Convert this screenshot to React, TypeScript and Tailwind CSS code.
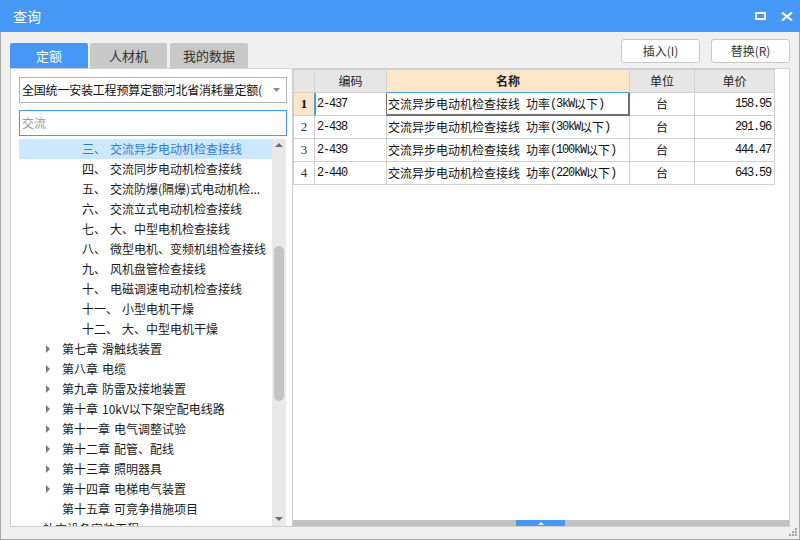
import React from "react";

function Mixed({ text }: { text: string }) {
  const parts = text.match(/[\x00-\x7f]+|[^\x00-\x7f]+/g) || [];
  return (
    <>
      {parts.map((p, i) =>
        /^[\x00-\x7f]/.test(p) ? (
          <span key={i} className="font-['Liberation_Mono',monospace] tracking-[-1.2px] whitespace-pre">
            {p}
          </span>
        ) : (
          <span key={i}>{p}</span>
        )
      )}
    </>
  );
}

const subs: [string, string][] = [
  ["三、", "交流异步电动机检查接线"],
  ["四、", "交流同步电动机检查接线"],
  ["五、", "交流防爆(隔爆)式电动机检..."],
  ["六、", "交流立式电动机检查接线"],
  ["七、", "大、中型电机检查接线"],
  ["八、", "微型电机、变频机组检查接线"],
  ["九、", "风机盘管检查接线"],
  ["十、", "电磁调速电动机检查接线"],
  ["十一、", "小型电机干燥"],
  ["十二、", "大、中型电机干燥"],
];

const chapters: [string, string, boolean][] = [
  ["第七章", "滑触线装置", true],
  ["第八章", "电缆", true],
  ["第九章", "防雷及接地装置", true],
  ["第十章", "10kV以下架空配电线路", true],
  ["第十一章", "电气调整试验", true],
  ["第十二章", "配管、配线", true],
  ["第十三章", "照明器具", true],
  ["第十四章", "电梯电气装置", true],
  ["第十五章", "可竞争措施项目", false],
];

const rows = [
  ["1", "2-437", "交流异步电动机检查接线 功率(3kW以下)", "台", "158.95"],
  ["2", "2-438", "交流异步电动机检查接线 功率(30kW以下)", "台", "291.96"],
  ["3", "2-439", "交流异步电动机检查接线 功率(100kW以下)", "台", "444.47"],
  ["4", "2-440", "交流异步电动机检查接线 功率(220kW以下)", "台", "643.59"],
];

function Arrow() {
  return (
    <svg width="5" height="8" viewBox="0 0 5 8" className="shrink-0">
      <path d="M0 0 L4 4 L0 8 Z" fill="#7a7a7a" />
    </svg>
  );
}

export default function App() {
  return (
    <div className="w-[800px] h-[540px] flex flex-col overflow-hidden font-['Noto_Sans_CJK_SC',sans-serif] text-[12px] text-[#222]">
      {/* Title bar */}
      <div className="h-[32px] shrink-0 bg-[#4598f5] flex items-center pl-[13px] pr-[7px]">
        <span className="text-white text-[14px] leading-none">查询</span>
        <div className="ml-auto flex items-center gap-[15px]">
          <svg width="11" height="8" viewBox="0 0 11 8">
            <rect x="1" y="1" width="9" height="6" fill="none" stroke="#fff" strokeWidth="2" />
          </svg>
          <svg width="12" height="9" viewBox="0 0 12 9">
            <path d="M1 0.5 L11 8.5 M11 0.5 L1 8.5" stroke="#fff" strokeWidth="2.2" />
          </svg>
        </div>
      </div>

      {/* Body */}
      <div className="flex-1 flex flex-col bg-[#f0f0f0] border-x border-b border-[#a9a9a9] relative">
        {/* Tabs + buttons */}
        <div className="h-[36px] shrink-0 flex px-[9px]">
          <div className="flex items-end">
            <div className="w-[78px] h-[25px] rounded-t-[2px] bg-[#4598f5] text-white text-[13px] flex items-center justify-center">
              定额
            </div>
            <div className="ml-[2px] w-[77px] h-[25px] rounded-t-[2px] bg-[#c8c8c8] text-[#333] text-[13px] flex items-center justify-center">
              人材机
            </div>
            <div className="ml-[3px] w-[78px] h-[25px] rounded-t-[2px] bg-[#c8c8c8] text-[#333] text-[13px] flex items-center justify-center">
              我的数据
            </div>
          </div>
          <div className="ml-auto mt-[7px] flex gap-[11px]">
            <div className="w-[79px] h-[24px] bg-white border border-[#c8c8c8] rounded-[3px] flex items-center justify-center text-[12px] text-[#333]">
              插入(I)
            </div>
            <div className="w-[79px] h-[24px] bg-white border border-[#c8c8c8] rounded-[3px] flex items-center justify-center text-[12px] text-[#333]">
              替换(R)
            </div>
          </div>
        </div>

        {/* Main */}
        <div className="h-[459px] shrink-0 flex px-[9px]">
          {/* Left panel */}
          <div className="w-[282px] bg-white border border-r-0 border-[#cfcfcf] flex flex-col pl-[8px] pr-[5px]">
            <div className="mt-[8px] h-[26px] shrink-0 border border-[#b4b4b4] flex items-center pl-[2px] pr-[6px]">
              <div className="flex-1 whitespace-nowrap text-[#111] leading-none tracking-[-0.2px]">
                全国统一安装工程预算定额河北省消耗量定额(
              </div>
              <svg width="7" height="4" viewBox="0 0 7 4" className="ml-[2px] shrink-0">
                <path d="M0 0 L7 0 L3.5 4 Z" fill="#8a8a8a" />
              </svg>
            </div>
            <div className="mt-[7px] h-[26px] shrink-0 border border-[#4598f5] flex items-center pl-[2px] text-[#9a9a9a]">
              交流
            </div>
            <div className="mt-[3px] flex-1 flex overflow-hidden">
              <div className="w-[253px] flex flex-col overflow-hidden">
                {subs.map(([n, t], i) => (
                  <div
                    key={i}
                    className={`h-[20px] shrink-0 flex items-center pl-[63px] whitespace-nowrap ${
                      i === 0 ? "bg-[#cce8ff] text-[#2f7ed6]" : "text-[#1a1a1a]"
                    }`}
                  >
                    <span>{n}</span>
                    <span className="ml-[4px]">{t}</span>
                  </div>
                ))}
                {chapters.map(([c, t, arr], i) => (
                  <div key={i} className="h-[20px] shrink-0 flex items-center pl-[27px] whitespace-nowrap text-[#1a1a1a]">
                    <div className="w-[16px] flex items-center">{arr ? <Arrow /> : null}</div>
                    <span>{c}</span>
                    <span className="ml-[4px]">{t}</span>
                  </div>
                ))}
                <div className="h-[20px] shrink-0 flex items-center pl-[24px] whitespace-nowrap text-[#1a1a1a]">
                  补充设备安装工程
                </div>
              </div>
              <div className="w-[14px] bg-[#e8e8e8] flex flex-col items-center">
                <div className="h-[12px] flex items-center justify-center">
                  <svg width="8" height="4" viewBox="0 0 8 4">
                    <path d="M0 4 L4 0 L8 4 Z" fill="#6e6e6e" />
                  </svg>
                </div>
                <div className="h-[95px]" />
                <div className="w-[10px] h-[155px] rounded-full bg-[#c3c3c3]" />
                <div className="flex-1" />
                <div className="h-[14px] flex items-center justify-center">
                  <svg width="8" height="4" viewBox="0 0 8 4">
                    <path d="M0 0 L8 0 L4 4 Z" fill="#6e6e6e" />
                  </svg>
                </div>
              </div>
            </div>
          </div>

          {/* Right panel */}
          <div className="w-[498px] bg-white border border-[#cfcfcf] flex flex-col">
            <div className="w-[482px] border-l border-t border-[#d0d0d0]">
              {/* header */}
              <div className="grid grid-cols-[21px_72px_243px_65px_80px] h-[23px] text-[12px] text-[#222]">
                <div className="bg-[#e6e6e6] border-r border-b border-[#d0d0d0]" />
                <div className="bg-[#e6e6e6] border-r border-b border-[#d0d0d0] flex items-center justify-center">编码</div>
                <div className="bg-[#fde7c9] border-r border-b border-[#d0d0d0] border-b-[#4598f5] flex items-center justify-center font-bold">名称</div>
                <div className="bg-[#e6e6e6] border-r border-b border-[#d0d0d0] flex items-center justify-center">单位</div>
                <div className="bg-[#e6e6e6] border-r border-b border-[#d0d0d0] flex items-center justify-center">单价</div>
              </div>
              {rows.map((r, i) => {
                const sel = i === 0;
                return (
                  <div key={i} className="grid grid-cols-[21px_72px_243px_65px_80px] h-[23px] text-[12px] text-[#111]">
                    <div
                      className={`border-r border-b border-[#d0d0d0] flex items-center justify-center font-['Liberation_Serif',serif] text-[13px] ${
                        sel ? "bg-[#fde5c7] font-bold border-r-[#4598f5]" : "text-[#333]"
                      }`}
                    >
                      {r[0]}
                    </div>
                    <div
                      className={`border-r border-b border-[#d0d0d0] flex items-center pl-[2px] ${
                        sel ? "shadow-[inset_1px_0_0_#4598f5] border-r-[#707070]" : ""
                      }`}
                    >
                      <Mixed text={r[1]} />
                    </div>
                    <div
                      className={`border-r border-b border-[#d0d0d0] flex items-center pl-[1px] whitespace-nowrap overflow-hidden ${
                        sel ? "border-r-[#707070] border-b-[#707070] shadow-[inset_-1px_-1px_0_#707070]" : ""
                      }`}
                    >
                      <Mixed text={r[2]} />
                    </div>
                    <div className="border-r border-b border-[#d0d0d0] flex items-center justify-center">{r[3]}</div>
                    <div className="border-r border-b border-[#d0d0d0] flex items-center justify-end pr-[3px]">
                      <Mixed text={r[4]} />
                    </div>
                  </div>
                );
              })}
            </div>
            <div className="flex-1" />
            <div className="h-[6px] shrink-0 flex bg-[#c2c2c2]">
              <div className="w-[223px]" />
              <div className="w-[49px] bg-[#4598f5] flex items-center justify-center">
                <svg width="6" height="3" viewBox="0 0 6 3">
                  <path d="M0 3 L3 0 L6 3 Z" fill="#fff" />
                </svg>
              </div>
            </div>
          </div>
        </div>

        {/* Bottom strip */}
        <div className="flex-1 flex justify-end items-end pr-[2px] pb-[3px]">
          <svg width="9" height="9" viewBox="0 0 9 9">
            <rect x="7" y="1" width="2" height="2" fill="#a0a0a0" />
            <rect x="4" y="4" width="2" height="2" fill="#a0a0a0" />
            <rect x="7" y="4" width="2" height="2" fill="#a0a0a0" />
            <rect x="1" y="7" width="2" height="2" fill="#a0a0a0" />
            <rect x="4" y="7" width="2" height="2" fill="#a0a0a0" />
            <rect x="7" y="7" width="2" height="2" fill="#a0a0a0" />
          </svg>
        </div>
      </div>
    </div>
  );
}
